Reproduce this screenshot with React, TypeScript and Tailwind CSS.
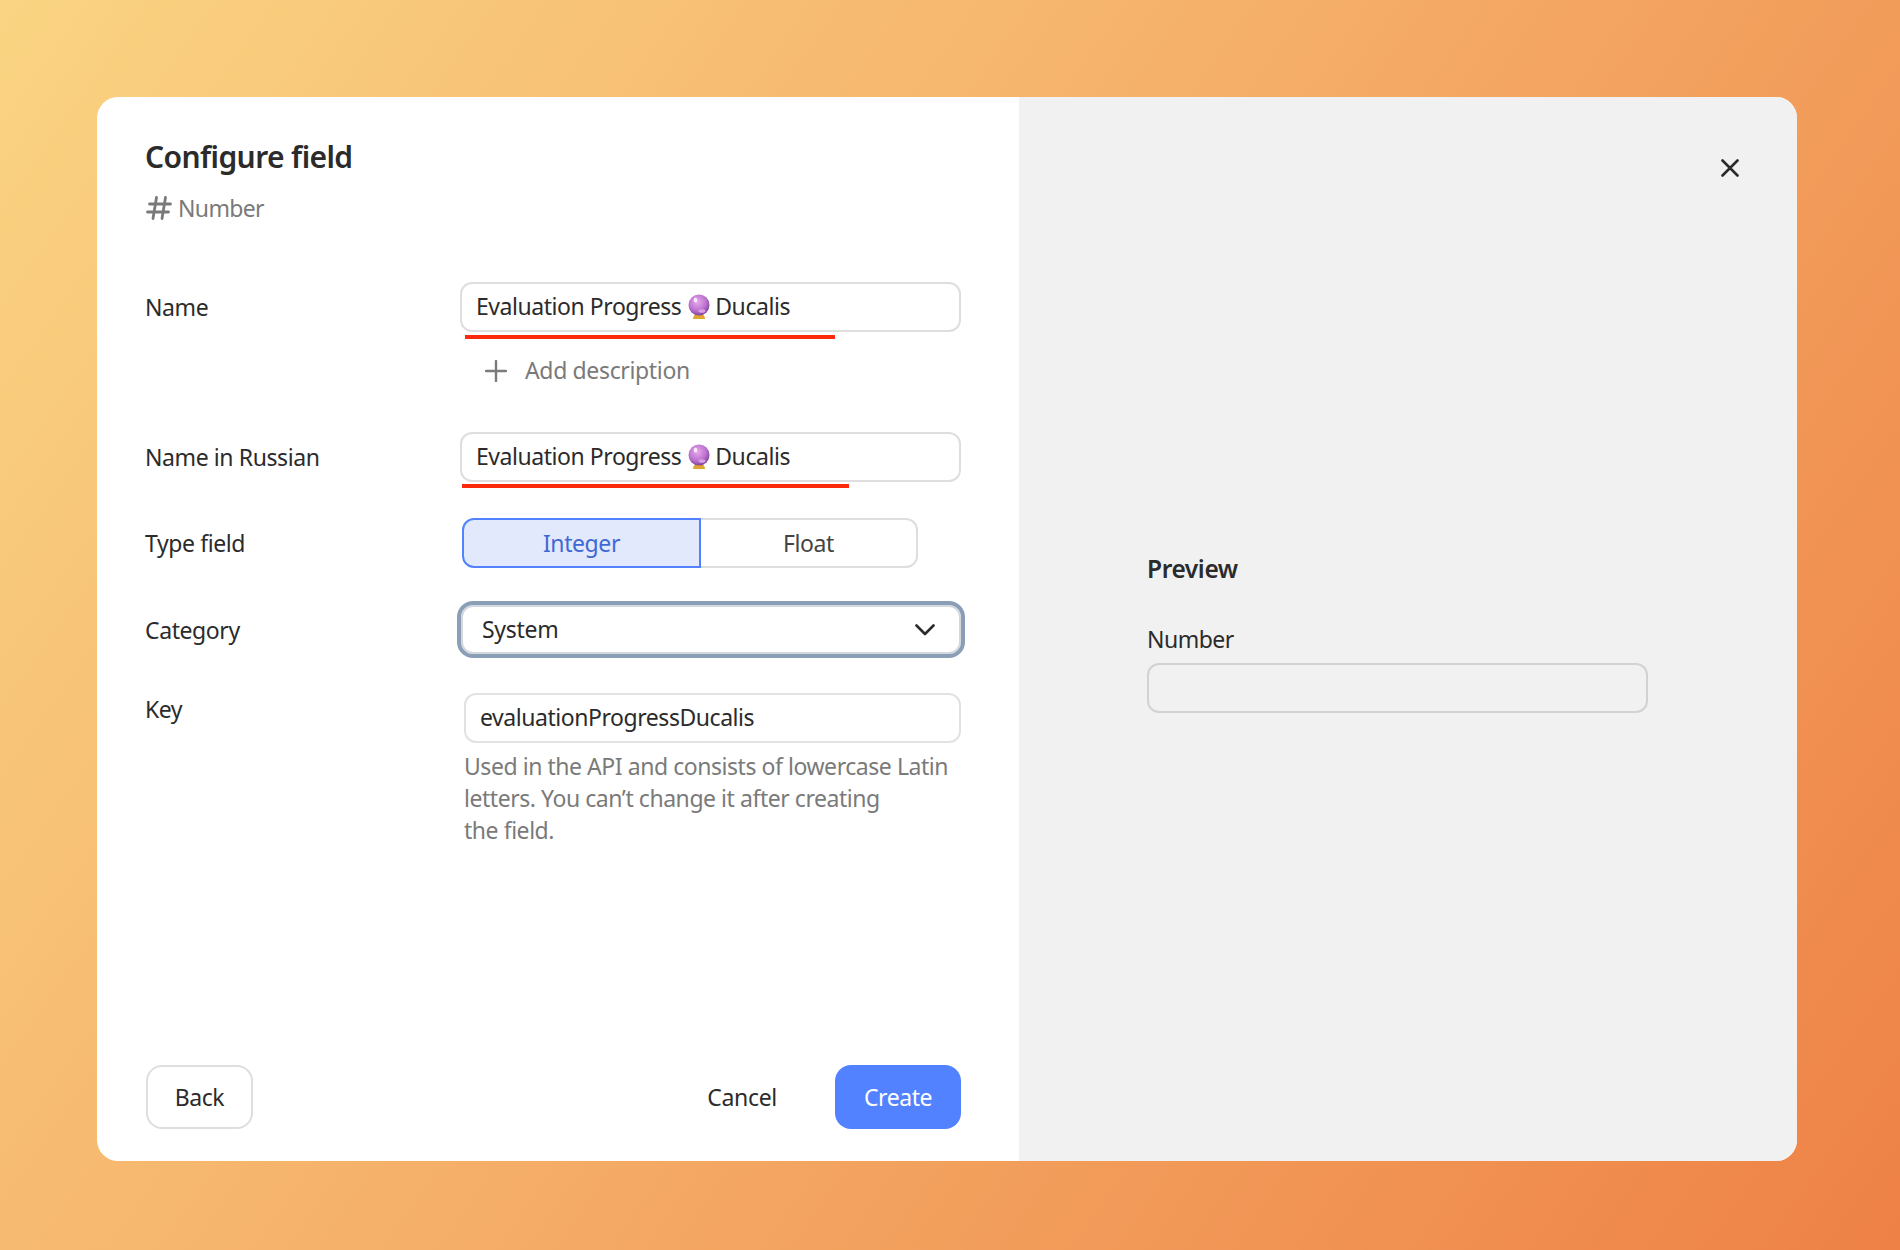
import React from "react";

const CrystalBall = () => (
  <svg width="22" height="26" viewBox="0 0 22 26" className="ml-[7px] mr-[5px] shrink-0">
    <defs>
      <radialGradient id="ball" cx="0.42" cy="0.35" r="0.68">
        <stop offset="0" stopColor="#e8a9ec" />
        <stop offset="0.6" stopColor="#bd74d0" />
        <stop offset="1" stopColor="#7c3f98" />
      </radialGradient>
    </defs>
    <path d="M5 25c0-2.500 1.500-4 2.500-5h7c1 1 2.500 2.500 2.500 5z" fill="#e0a62f" />
    <circle cx="11" cy="11" r="10.500" fill="url(#ball)" />
    <ellipse cx="7.500" cy="6" rx="1.800" ry="2.600" fill="#f8e8fa" />
    <ellipse cx="14" cy="17" rx="3.500" ry="1.800" fill="#dca0e4" />
  </svg>
);

const EvaluationText = () => (
  <span className="flex items-center pb-[1px] text-[23px] text-[#2b2b2b] tracking-[-0.45px]">
    Evaluation Progress
    <CrystalBall />
    Ducalis
  </span>
);

const Label = ({ children }: { children: React.ReactNode }) => (
  <div className="w-[315px] shrink-0 text-[23px] leading-[32px] text-[#2b2b2b] tracking-[-0.4px]">{children}</div>
);

export default function App() {
  return (
    <div
      className="w-full h-screen overflow-hidden pt-[97px] pl-[97px] bg-[linear-gradient(125deg,#fad482_0%,#f5b069_45%,#ee8146_100%)]"
      style={{ fontFamily: '"Noto Sans", sans-serif' }}
    >
      <div className="w-[1700px] h-[1064px] flex rounded-[21px] overflow-hidden bg-white">
        <div className="w-[922px] shrink-0 flex flex-col pl-[48px] pr-[58px] pb-[32px] pt-[40px]">
          <h1 className="text-[30px] leading-[40px] font-semibold text-[#2b2b2b] tracking-[-0.6px]">Configure field</h1>
          <div className="mt-[15px] flex items-center h-[32px] text-[23px] text-[#7a7a7a] tracking-[-0.65px]">
            <svg width="26" height="26" viewBox="0 0 26 26" className="ml-[1px] mr-[6px] shrink-0" fill="none" stroke="#7a7a7a" strokeWidth="2.800" strokeLinecap="round">
              <path d="M10.500 2.500 7 23.500M19.500 2.500 16 23.500M3.500 9h21M1.500 17h21" />
            </svg>
            Number
          </div>

          <div className="mt-[58px] flex items-center">
            <Label>Name</Label>
            <div className="w-[501px] h-[50px] flex items-center pl-[14px] rounded-[12px] border-2 border-[#dedede]">
              <EvaluationText />
            </div>
          </div>
          <div className="mt-[3px] ml-[320px] w-[370px] h-[4px] bg-[#fc2a0d]" />
          <div className="mt-[16px] ml-[340px] flex items-center h-[32px] text-[23px] text-[#7a7a7a] tracking-[-0.35px]">
            <svg width="22" height="22" viewBox="0 0 22 22" className="mr-[18px] shrink-0" fill="none" stroke="#7a7a7a" strokeWidth="2.400" strokeLinecap="round">
              <path d="M11 1v20M1 11h20" />
            </svg>
            <span className="pb-[2px]">Add description</span>
          </div>

          <div className="mt-[45px] flex items-center">
            <Label>Name in Russian</Label>
            <div className="w-[501px] h-[50px] flex items-center pl-[14px] rounded-[12px] border-2 border-[#dedede]">
              <EvaluationText />
            </div>
          </div>
          <div className="mt-[2px] ml-[317px] w-[387px] h-[4px] bg-[#fc2a0d]" />

          <div className="mt-[30px] flex items-center">
            <Label>Type field</Label>
            <div className="ml-[2px] flex h-[50px] text-[23px] tracking-[-0.4px]">
              <div className="w-[239px] flex items-center justify-center rounded-l-[12px] border-2 border-[#5282ff] bg-[#e3e9fd] text-[#3f68d4]">Integer</div>
              <div className="w-[217px] flex items-center justify-center rounded-r-[12px] border-2 border-l-0 border-[#dedede] text-[#444444]">Float</div>
            </div>
          </div>

          <div className="mt-[33px] flex items-center">
            <Label>Category</Label>
            <div className="shrink-0 -ml-[3px] w-[508px] h-[57px] flex items-center justify-between pl-[21px] pr-[26px] rounded-[16px] border-[4px] border-[#8a9fb6] shadow-[inset_0_0_0_2px_#d3d8de] text-[23px] text-[#2b2b2b] tracking-[-0.3px]">
              <span className="pb-[1px]">System</span>
              <svg width="20" height="12" viewBox="0 0 20 12" fill="none" stroke="#2b2b2b" strokeWidth="2.600" strokeLinecap="round" strokeLinejoin="round">
                <path d="M1.500 1.500 10 10l8.500-8.500" />
              </svg>
            </div>
          </div>

          <div className="mt-[35px] flex items-start">
            <div className="mt-[6px] w-[319px] shrink-0 text-[23px] leading-[20px] text-[#2b2b2b] tracking-[-0.45px]">Key</div>
            <div className="w-[497px]">
              <div className="h-[50px] flex items-center pl-[14px] pb-[1px] rounded-[12px] border-2 border-[#e2e2e2] text-[23px] text-[#2b2b2b] tracking-[-0.45px]">
                evaluationProgressDucalis
              </div>
              <p className="mt-[7px] text-[23px] leading-[32px] text-[#7a7a7a] tracking-[-0.45px]">
                Used in the API and consists of lowercase Latin
                <br />
                letters. You can’t change it after creating
                <br />
                the field.
              </p>
            </div>
          </div>

          <div className="mt-auto flex items-center">
            <button className="ml-[1px] w-[107px] h-[64px] rounded-[16px] border-2 border-[#dedede] text-[23px] text-[#2b2b2b] tracking-[-0.45px]">Back</button>
            <button className="ml-auto mr-[58px] text-[23px] text-[#2b2b2b] tracking-[-0.3px]">Cancel</button>
            <button className="w-[126px] h-[64px] rounded-[16px] bg-[#5282ff] text-[23px] text-white tracking-[-0.45px]">Create</button>
          </div>
        </div>

        <div className="flex-1 flex flex-col bg-[#f1f1f1] pt-[62px] pl-[128px]">
          <svg width="18" height="18" viewBox="0 0 18 18" className="self-end mr-[58px]" fill="none" stroke="#2b2b2b" strokeWidth="2.600" strokeLinecap="round">
            <path d="M1.500 1.500l15 15M16.500 1.500l-15 15" />
          </svg>
          <div className="mt-[376px] text-[24.500px] leading-[32px] font-semibold text-[#2b2b2b] tracking-[-0.4px]">Preview</div>
          <div className="mt-[38px] text-[23px] leading-[32px] text-[#2b2b2b] tracking-[-0.5px]">Number</div>
          <div className="mt-[8px] w-[501px] h-[50px] rounded-[12px] border-2 border-[#d2d2d2]" />
        </div>
      </div>
    </div>
  );
}
